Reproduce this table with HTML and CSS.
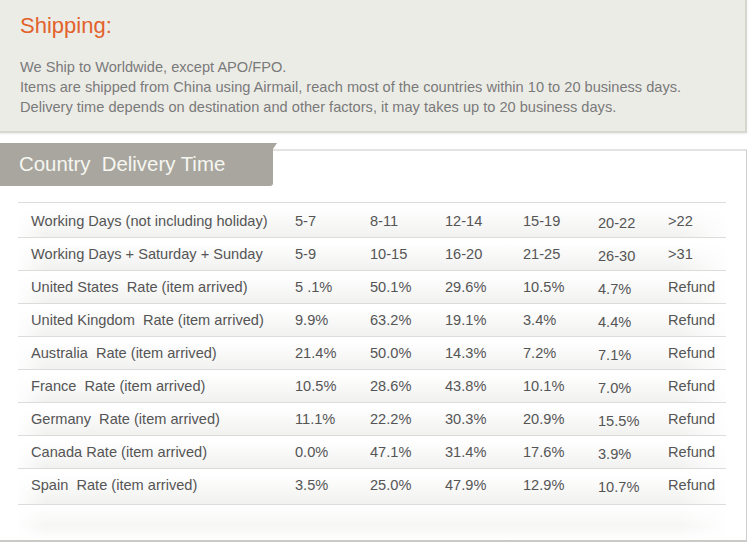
FILE: index.html
```html
<!DOCTYPE html>
<html>
<head>
<meta charset="utf-8">
<link rel="stylesheet" href="styles.css">
</head>
<body>
<div class="shipping">
  <h1 class="title">Shipping:</h1>
  <p class="intro">We Ship to Worldwide, except APO/FPO.<br>Items are shipped from China using Airmail, reach most of the countries within 10 to 20 business days.<br>Delivery time depends on destination and other factors, it may takes up to 20 business days.</p>
</div>
<div class="delivery">
  <div class="tabbar">
    <div class="tab">Country&nbsp; Delivery Time</div>
    <div class="tabline"></div>
  </div>
  <div class="panel">
    <div class="table">
      <div class="row"><span class="label">Working Days (not including holiday)</span><span>5-7</span><span>8-11</span><span>12-14</span><span>15-19</span><span class="low">20-22</span><span>&gt;22</span></div>
      <div class="row"><span class="label">Working Days + Saturday + Sunday</span><span>5-9</span><span>10-15</span><span>16-20</span><span>21-25</span><span class="low">26-30</span><span>&gt;31</span></div>
      <div class="row"><span class="label">United States&nbsp; Rate (item arrived)</span><span>5 .1%</span><span>50.1%</span><span>29.6%</span><span>10.5%</span><span class="low">4.7%</span><span>Refund</span></div>
      <div class="row"><span class="label">United Kingdom&nbsp; Rate (item arrived)</span><span>9.9%</span><span>63.2%</span><span>19.1%</span><span>3.4%</span><span class="low">4.4%</span><span>Refund</span></div>
      <div class="row"><span class="label">Australia&nbsp; Rate (item arrived)</span><span>21.4%</span><span>50.0%</span><span>14.3%</span><span>7.2%</span><span class="low">7.1%</span><span>Refund</span></div>
      <div class="row"><span class="label">France&nbsp; Rate (item arrived)</span><span>10.5%</span><span>28.6%</span><span>43.8%</span><span>10.1%</span><span class="low">7.0%</span><span>Refund</span></div>
      <div class="row"><span class="label">Germany&nbsp; Rate (item arrived)</span><span>11.1%</span><span>22.2%</span><span>30.3%</span><span>20.9%</span><span class="low">15.5%</span><span>Refund</span></div>
      <div class="row"><span class="label">Canada Rate (item arrived)</span><span>0.0%</span><span>47.1%</span><span>31.4%</span><span>17.6%</span><span class="low">3.9%</span><span>Refund</span></div>
      <div class="row"><span class="label">Spain&nbsp; Rate (item arrived)</span><span>3.5%</span><span>25.0%</span><span>47.9%</span><span>12.9%</span><span class="low">10.7%</span><span>Refund</span></div>
    </div>
    <div class="fade"></div>
  </div>
</div>
</body>
</html>
```

FILE: styles.css
```css
html, body {
  margin: 0;
  padding: 0;
  background: #ffffff;
  font-family: "Liberation Sans", Arial, sans-serif;
}

.shipping {
  box-sizing: border-box;
  width: 747px;
  height: 133px;
  padding: 13px 20px 0 20px;
  background: #ecece7;
  border-right: 2px solid #d6d6d0;
  border-bottom: 2px solid #d8d8d1;
  box-shadow: 0 1px 2px rgba(0,0,0,0.08);
}

.title {
  margin: 0;
  font-size: 22px;
  line-height: 26px;
  font-weight: normal;
  color: #e2622c;
}

.intro {
  margin: 18px 0 0 0;
  font-size: 14.6px;
  line-height: 20px;
  color: #7a7a7a;
}

.delivery {
  margin-top: 10px;
  width: 747px;
}

.tabbar {
  display: flex;
  height: 43px;
}

.tab {
  position: relative;
  width: 254px;
  padding-left: 19px;
  height: 43px;
  line-height: 43px;
  background: #a8a69e;
  color: #f6f6f1;
  font-size: 20.4px;
  border-bottom-right-radius: 3px;
}

.tab::after {
  content: "";
  position: absolute;
  right: -4px;
  top: 0;
  width: 0;
  height: 0;
  border-left: 4px solid #a8a69e;
  border-bottom: 6px solid transparent;
}

.tabline {
  flex: 1;
  margin-top: 6px;
  border-top: 2px solid #e3e3e1;
  border-right: 1px solid #cfcfcb;
}

.panel {
  box-sizing: border-box;
  display: flex;
  flex-direction: column;
  height: 356px;
  padding: 16px 20px 0 18px;
  border-right: 1px solid #cfcfcb;
  border-bottom: 2px solid #c9c9c5;
}

.table {
  border-top: 1px solid #dddddb;
}

.row {
  display: grid;
  grid-template-columns: 277px 75px 75px 78px 75px 70px 1fr;
  align-items: center;
  height: 32px;
  border-bottom: 1px solid #dcdcda;
  background: linear-gradient(to right, rgba(255,255,255,0.9), rgba(255,255,255,0) 4%, rgba(255,255,255,0) 93%, rgba(255,255,255,0.9)),
              linear-gradient(to bottom, #ffffff 15%, #f1f1f0 100%);
  font-size: 14.6px;
  color: #555555;
}

.row:first-child {
  padding-top: 1px;
  box-sizing: content-box;
  height: 33px;
}

.row:last-child {
  height: 35px;
}

.row:last-child span {
  margin-bottom: 4px;
}

.label {
  padding-left: 13px;
}

.low {
  padding-top: 4px;
}

.fade {
  flex: 1;
  background: linear-gradient(to right, rgba(255,255,255,0.9), rgba(255,255,255,0) 4%, rgba(255,255,255,0) 93%, rgba(255,255,255,0.9)),
              linear-gradient(to bottom, #ffffff, #f6f6f5 60%, #ffffff);
}
```
